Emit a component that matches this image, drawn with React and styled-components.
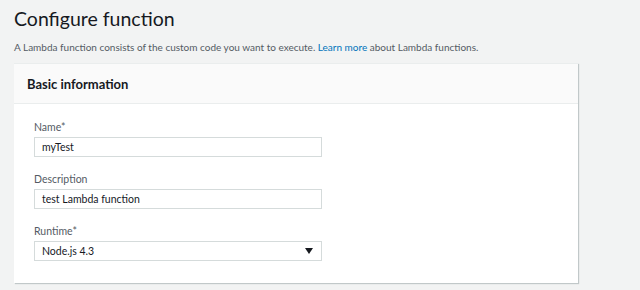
import React from "react";
import styled, { createGlobalStyle } from "styled-components";

const GlobalStyle = createGlobalStyle`
  html, body {
    margin: 0;
    padding: 0;
    background: #f2f3f3;
    font-family: Lato, "Open Sans", sans-serif;
    color: #16191f;
  }
`;

const Page = styled.div`
  width: 640px;
  height: 290px;
  padding: 5px 0 0 14px;
  box-sizing: border-box;
  overflow: hidden;
`;

const Title = styled.h1`
  margin: 0;
  font-size: 19.5px;
  font-weight: 400;
  line-height: 28px;
  color: #16191f;
`;

const Intro = styled.p`
  margin: 7px 0 0;
  font-size: 10px;
  line-height: 14px;
  color: #545b64;
  a {
    color: #0073bb;
    text-decoration: none;
  }
`;

const Card = styled.section`
  margin-top: 9px;
  width: 564px;
  background: #fff;
  border-top: 1px solid #eaeded;
  box-shadow: 1px 1px 1px 0 rgba(0, 28, 36, 0.2);
`;

const CardHeader = styled.div`
  height: 39px;
  display: flex;
  align-items: center;
  padding: 0 13px;
  background: #fafafa;
  border-bottom: 1px solid #eaeded;
  font-size: 13px;
  font-weight: 700;
  color: #16191f;
`;

const CardBody = styled.div`
  padding: 16px 20px 22px;
  display: flex;
  flex-direction: column;
  gap: 15px;
`;

const Field = styled.div`
  display: flex;
  flex-direction: column;
  gap: 3px;
`;

const Label = styled.label`
  font-size: 10.5px;
  line-height: 14px;
  color: #545b64;
`;

const Box = styled.div`
  width: 288px;
  height: 20px;
  box-sizing: border-box;
  border: 1px solid #d5dbdb;
  background: #fff;
  display: flex;
  align-items: center;
  justify-content: space-between;
  padding: 0 8px 0 7px;
  font-size: 10.5px;
  color: #16191f;
`;

const Caret = styled.svg`
  width: 8px;
  height: 6px;
`;

const fields = [
  { label: "Name*", value: "myTest" },
  { label: "Description", value: "test Lambda function" },
  { label: "Runtime*", value: "Node.js 4.3", select: true },
];

export default function App() {
  return (
    <>
      <GlobalStyle />
      <Page>
        <Title>Configure function</Title>
        <Intro>
          A Lambda function consists of the custom code you want to execute.{" "}
          <a href="#">Learn more</a> about Lambda functions.
        </Intro>
        <Card>
          <CardHeader>Basic information</CardHeader>
          <CardBody>
            {fields.map(f => (
              <Field key={f.label}>
                <Label>{f.label}</Label>
                <Box>
                  <span>{f.value}</span>
                  {f.select && (
                    <Caret viewBox="0 0 8 6">
                      <path d="M0 0h8L4 6z" fill="#16191f" />
                    </Caret>
                  )}
                </Box>
              </Field>
            ))}
          </CardBody>
        </Card>
      </Page>
    </>
  );
}
